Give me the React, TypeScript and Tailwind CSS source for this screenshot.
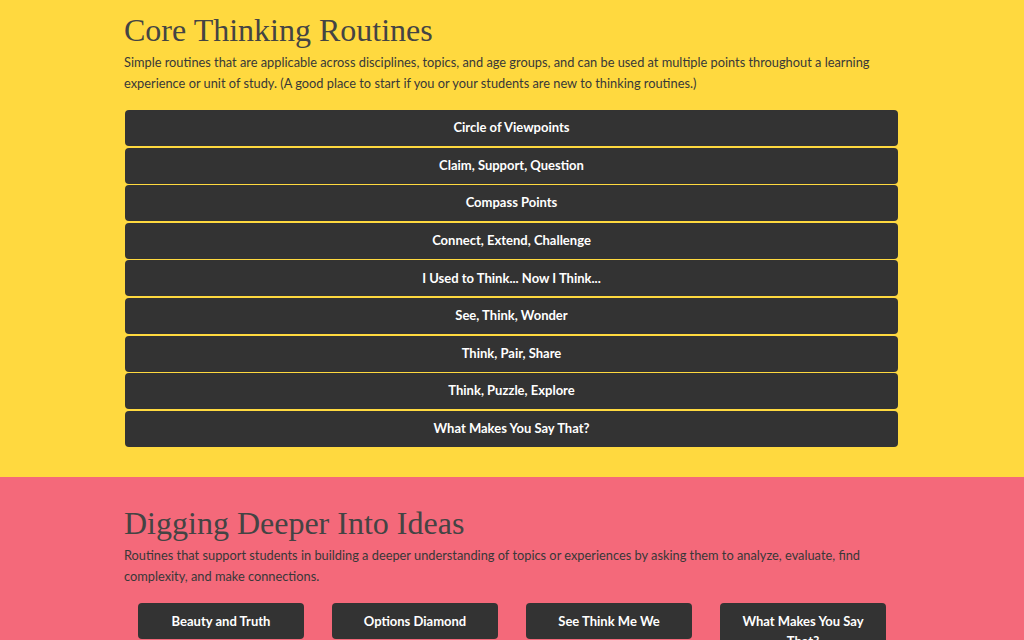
const core = [
  'Circle of Viewpoints',
  'Claim, Support, Question',
  'Compass Points',
  'Connect, Extend, Challenge',
  'I Used to Think... Now I Think...',
  'See, Think, Wonder',
  'Think, Pair, Share',
  'Think, Puzzle, Explore',
  'What Makes You Say That?',
]

const deeper = ['Beauty and Truth', 'Options Diamond', 'See Think Me We', 'What Makes You Say That?']

export default function App() {
  return (
    <div className="min-h-screen font-['Lato','Noto_Sans',sans-serif] text-[#383838]">
      <section className="bg-[#ffd93f] pt-[11px] pb-[30px]">
        <div className="mx-auto w-[776px]">
          <h1 className="font-['Liberation_Serif',serif] text-[32px] leading-[38px] text-[#444]">
            Core Thinking Routines
          </h1>
          <p className="mt-[3px] text-[12.8px] leading-[21px]">
            Simple routines that are applicable across disciplines, topics, and age groups, and can be used at multiple
            points throughout a learning experience or unit of study. (A good place to start if you or your students are
            new to thinking routines.)
          </p>
          <div className="mt-[16px] flex flex-col gap-[1.6px] pr-[2px] pl-[1px]">
            {core.map(t => (
              <button
                key={t}
                className="h-[36px] w-full rounded-[4px] bg-[#333] text-[13px] font-bold text-white"
              >
                {t}
              </button>
            ))}
          </div>
        </div>
      </section>
      <section className="bg-[#f4697a] pt-[27px] pb-[40px]">
        <div className="mx-auto w-[776px]">
          <h2 className="font-['Liberation_Serif',serif] text-[32px] leading-[38px] text-[#444]">
            Digging Deeper Into Ideas
          </h2>
          <p className="mt-[3px] text-[12.8px] leading-[21px]">
            Routines that support students in building a deeper understanding of topics or experiences by asking them to
            analyze, evaluate, find complexity, and make connections.
          </p>
          <div className="mt-[16px] grid grid-cols-4">
            {deeper.map(t => (
              <div key={t} className="px-[14px]">
                <button className="w-full rounded-[4px] bg-[#333] px-[16px] py-[8px] text-[13px] leading-[20px] font-bold text-white">
                  {t}
                </button>
              </div>
            ))}
          </div>
        </div>
      </section>
    </div>
  )
}
